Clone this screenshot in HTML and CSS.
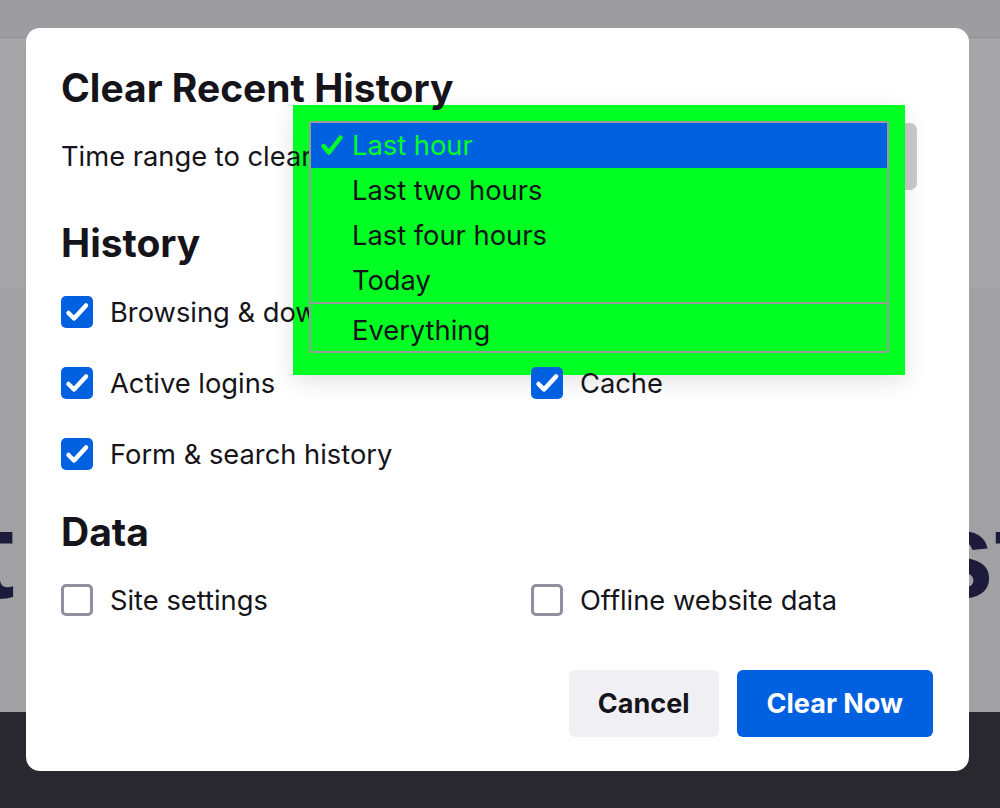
FILE: index.html
```html
<!DOCTYPE html>
<html lang="en">
<head>
<meta charset="utf-8">
<title>Clear Recent History</title>
<link rel="stylesheet" href="styles.css">
</head>
<body>
<div class="page">
  <div class="toolbar"></div>
  <div class="content">
    <div class="band"></div>
    <div class="hero"><span class="hero-l">t</span><span class="hero-r">st</span></div>
  </div>
  <div class="footer"></div>
</div>

<div class="dialog">
  <div class="popup-bg"></div>
  <h1 class="title">Clear Recent History</h1>
  <div class="range-row">
    <span class="label">Time range to clear:</span>
    <div class="select"></div>
  </div>

  <h2 class="heading">History</h2>
  <div class="grid">
    <div class="item"><span class="box on"><svg viewBox="0 0 32 32"><path d="M7.5 17 L13 22.5 L25 9.5"/></svg></span><span>Browsing &amp; download history</span></div>
    <div class="item"><span class="box on"><svg viewBox="0 0 32 32"><path d="M7.5 17 L13 22.5 L25 9.5"/></svg></span><span>Cookies</span></div>
    <div class="item"><span class="box on"><svg viewBox="0 0 32 32"><path d="M7.5 17 L13 22.5 L25 9.5"/></svg></span><span>Active logins</span></div>
    <div class="item"><span class="box on"><svg viewBox="0 0 32 32"><path d="M7.5 17 L13 22.5 L25 9.5"/></svg></span><span>Cache</span></div>
    <div class="item"><span class="box on"><svg viewBox="0 0 32 32"><path d="M7.5 17 L13 22.5 L25 9.5"/></svg></span><span>Form &amp; search history</span></div>
  </div>

  <h2 class="heading data">Data</h2>
  <div class="grid data-grid">
    <div class="item"><span class="box off"></span><span>Site settings</span></div>
    <div class="item"><span class="box off"></span><span>Offline website data</span></div>
  </div>

  <div class="actions">
    <button class="btn cancel">Cancel</button>
    <button class="btn primary">Clear Now</button>
  </div>

  <div class="popup-list">
    <div class="opt sel"><svg class="tick" viewBox="0 0 24 24"><path d="M3.5 13 L9 19.5 L20.5 4.5"/></svg>Last hour</div>
    <div class="opt">Last two hours</div>
    <div class="opt">Last four hours</div>
    <div class="opt r4">Today</div>
    <div class="sep"></div>
    <div class="opt last">Everything</div>
  </div>
</div>
</body>
</html>
```

FILE: styles.css
```css
html, body {
  margin: 0;
  padding: 0;
}

body {
  width: 1000px;
  height: 808px;
  overflow: hidden;
  position: relative;
  font-family: Inter, "Liberation Sans", sans-serif;
}

.page {
  display: flex;
  flex-direction: column;
  height: 808px;
}

.toolbar {
  height: 37px;
  background: #9d9ca1;
  border-bottom: 1px solid #8e8d92;
}

.content {
  flex: 1;
  background: #a1a1a4;
}

.band {
  height: 250px;
  background: #a5a5a8;
}

.hero {
  margin-top: 204px;
  display: flex;
  justify-content: space-between;
  overflow: hidden;
  font-family: "Liberation Sans", Arial, sans-serif;
  font-weight: 700;
  font-size: 125px;
  line-height: 125px;
  color: #1e1a3c;
}

.hero-l {
  margin-left: -27px;
}

.hero-r {
  margin-right: -36px;
}

.footer {
  height: 96px;
  background: #29282e;
}

/* dialog */
.dialog {
  position: absolute;
  left: 26px;
  top: 28px;
  width: 943px;
  height: 743px;
  box-sizing: border-box;
  padding: 36px 36px 34px 35px;
  background: #fff;
  border-radius: 14px;
  z-index: 0;
  display: flex;
  flex-direction: column;
  color: #15141a;
}

.title {
  margin: 0;
  font-size: 39px;
  line-height: 48px;
  font-weight: 700;
}

.range-row {
  margin-top: 11px;
  height: 67px;
  display: flex;
  align-items: center;
  font-size: 27.3px;
}

.select {
  position: relative;
  z-index: -2;
  flex: 1;
  align-self: stretch;
  margin-left: 14px;
  margin-right: 16px;
  background: #cbcbcf;
  border-radius: 7px;
}

.heading {
  margin: 29px 0 0;
  font-size: 39px;
  line-height: 48px;
  font-weight: 700;
}

.heading.data {
  margin-top: 18.5px;
}

.grid {
  margin-top: 9.5px;
  display: grid;
  grid-template-columns: 470px 1fr;
  grid-auto-rows: 71px;
}

.data-grid {
  margin-top: 8.5px;
}

.item {
  display: flex;
  align-items: center;
  gap: 17px;
  font-size: 27.3px;
  white-space: nowrap;
}

.box {
  width: 32px;
  height: 32px;
  flex: none;
  box-sizing: border-box;
  border-radius: 5px;
  display: block;
}

.box svg {
  display: block;
  width: 32px;
  height: 32px;
}

.box path {
  fill: none;
  stroke: #fff;
  stroke-width: 4.5;
  stroke-linecap: round;
  stroke-linejoin: round;
}

.box.on {
  background: #0061e0;
}

.box.off {
  border: 3px solid #8f8f9d;
  background: #fff;
}

.actions {
  margin-top: auto;
  display: flex;
  justify-content: flex-end;
  gap: 18px;
}

.btn {
  height: 67px;
  border: none;
  border-radius: 6px;
  padding: 0 30px;
  font-family: Inter, "Liberation Sans", sans-serif;
  font-size: 27px;
  font-weight: 700;
}

.btn.cancel {
  background: #f0f0f4;
  color: #15141a;
  padding: 0 29px;
}

.btn.primary {
  background: #0061e0;
  color: #fff;
}

/* open dropdown */
.popup-bg {
  position: absolute;
  left: 267px;
  top: 77px;
  width: 612px;
  height: 270px;
  background: #00ff22;
  z-index: -1;
  box-shadow: 0 6px 22px rgba(0, 0, 0, 0.12);
}

.popup-list {
  position: absolute;
  left: 283px;
  top: 93px;
  width: 580px;
  height: 232px;
  box-sizing: border-box;
  border: 2px solid #9a9a9a;
  border-radius: 3px;
  background: #00ff22;
  z-index: 1;
  color: #15141a;
}

.opt {
  position: relative;
  height: 45px;
  display: flex;
  align-items: center;
  padding-left: 41px;
  font-size: 27.3px;
  white-space: nowrap;
}

.opt.sel {
  background: #0061e0;
  color: #00ff22;
}

.opt.r4 {
  height: 44px;
}

.opt.last {
  height: 42px;
}

.sep {
  height: 2px;
  background: #9a9a9a;
  margin-bottom: 5px;
}

.tick {
  position: absolute;
  left: 9px;
  top: 10px;
  width: 24px;
  height: 24px;
}

.tick path {
  fill: none;
  stroke: #00ff22;
  stroke-width: 4.4;
  stroke-linecap: round;
  stroke-linejoin: round;
}
```
